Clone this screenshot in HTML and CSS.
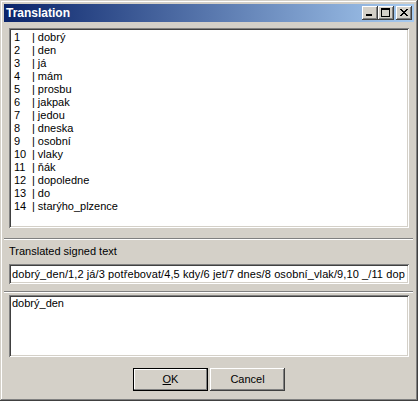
FILE: index.html
```html
<!DOCTYPE html>
<html>
<head>
<meta charset="utf-8">
<link rel="stylesheet" href="styles.css">
</head>
<body>
<div class="window">
  <div class="titlebar">
    <span class="title">Translation</span>
    <div class="tb-buttons">
      <div class="tb-btn"><svg width="16" height="14" shape-rendering="crispEdges"><rect x="4" y="8" width="6" height="2" fill="#000"/></svg></div>
      <div class="tb-btn"><svg width="16" height="14" shape-rendering="crispEdges"><rect x="3" y="2" width="9" height="2" fill="#000"/><rect x="3" y="2" width="1" height="9" fill="#000"/><rect x="11" y="2" width="1" height="9" fill="#000"/><rect x="3" y="10" width="9" height="1" fill="#000"/></svg></div>
      <div class="tb-btn close"><svg width="16" height="14" shape-rendering="crispEdges" fill="#000">
        <rect x="4" y="3" width="2" height="1"/><rect x="10" y="3" width="2" height="1"/>
        <rect x="5" y="4" width="2" height="1"/><rect x="9" y="4" width="2" height="1"/>
        <rect x="6" y="5" width="4" height="1"/>
        <rect x="7" y="6" width="2" height="1"/>
        <rect x="6" y="7" width="4" height="1"/>
        <rect x="5" y="8" width="2" height="1"/><rect x="9" y="8" width="2" height="1"/>
        <rect x="4" y="9" width="2" height="1"/><rect x="10" y="9" width="2" height="1"/>
      </svg></div>
    </div>
  </div>
  <div class="client">
    <div class="listbox">
      <div class="row"><span class="n">1</span><span class="p">|</span>dobrý</div>
      <div class="row"><span class="n">2</span><span class="p">|</span>den</div>
      <div class="row"><span class="n">3</span><span class="p">|</span>já</div>
      <div class="row"><span class="n">4</span><span class="p">|</span>mám</div>
      <div class="row"><span class="n">5</span><span class="p">|</span>prosbu</div>
      <div class="row"><span class="n">6</span><span class="p">|</span>jakpak</div>
      <div class="row"><span class="n">7</span><span class="p">|</span>jedou</div>
      <div class="row"><span class="n">8</span><span class="p">|</span>dneska</div>
      <div class="row"><span class="n">9</span><span class="p">|</span>osobní</div>
      <div class="row"><span class="n">10</span><span class="p">|</span>vlaky</div>
      <div class="row"><span class="n">11</span><span class="p">|</span>ňák</div>
      <div class="row"><span class="n">12</span><span class="p">|</span>dopoledne</div>
      <div class="row"><span class="n">13</span><span class="p">|</span>do</div>
      <div class="row"><span class="n">14</span><span class="p">|</span>starýho_plzence</div>
    </div>
    <div class="sep sep1"></div>
    <div class="label">Translated signed text</div>
    <div class="edit">dobrý_den/1,2 já/3 potřebovat/4,5 kdy/6 jet/7 dnes/8 osobní_vlak/9,10 _/11 dop</div>
    <div class="sep sep2"></div>
    <div class="memo">dobrý_den</div>
    <div class="buttons">
      <div class="btn default"><span class="u">O</span>K</div>
      <div class="btn">Cancel</div>
    </div>
  </div>
</div>
</body>
</html>
```

FILE: styles.css
```css
* { box-sizing: border-box; }
html, body { margin: 0; padding: 0; }
body {
  width: 418px;
  height: 401px;
  overflow: hidden;
  font-family: "Liberation Sans", Arial, sans-serif;
  font-size: 11px;
  color: #000;
  background: #d4d0c8;
}
.window {
  width: 418px;
  height: 401px;
  padding: 4px;
  background: #d4d0c8;
  box-shadow: inset -1px -1px #404040, inset 1px 1px #d4d0c8, inset -2px -2px #808080, inset 2px 2px #ffffff;
  display: flex;
  flex-direction: column;
}
.titlebar {
  height: 18px;
  flex: none;
  display: flex;
  align-items: center;
  justify-content: space-between;
  padding: 0 2px 0 2px;
  background: linear-gradient(to right, #0a246a, #a6caf0);
}
.title {
  color: #fff;
  font-weight: bold;
  font-size: 12px;
  line-height: 18px;
}
.tb-buttons {
  display: flex;
  align-items: center;
}
.tb-btn {
  width: 16px;
  height: 14px;
  background: #d4d0c8;
  box-shadow: inset -1px -1px #404040, inset 1px 1px #ffffff, inset -2px -2px #808080, inset 2px 2px #d4d0c8;
}
.tb-btn svg { display: block; }
.tb-btn.close { margin-left: 2px; }
.client {
  flex: 1;
  display: flex;
  flex-direction: column;
  padding: 6px 5px 0 5px;
}
.listbox, .edit, .memo {
  background: #fff;
  box-shadow: inset 1px 1px #808080, inset -1px -1px #ffffff, inset 2px 2px #404040, inset -2px -2px #d4d0c8;
}
.listbox {
  height: 200px;
  padding: 3px 3px 0 5px;
}
.row {
  line-height: 13px;
  height: 13px;
  white-space: nowrap;
}
.n {
  display: inline-block;
  width: 18px;
}
.p { margin-right: 3px; }
.sep {
  height: 2px;
  border-top: 1px solid #808080;
  border-bottom: 1px solid #ffffff;
  margin-left: -5px;
  margin-right: -4px;
}
.sep1 { margin-top: 10px; }
.label {
  margin-top: 5px;
  line-height: 13px;
  height: 13px;
}
.edit {
  margin-top: 6px;
  height: 20px;
  padding: 2px 2px 2px 3px;
  line-height: 16px;
  white-space: nowrap;
  overflow: hidden;
  letter-spacing: 0.1px;
}
.sep2 { margin-top: 7px; }
.memo {
  margin-top: 2px;
  height: 62px;
  padding: 2px 3px;
  line-height: 13px;
}
.buttons {
  margin-top: 11px;
  display: flex;
  justify-content: center;
  gap: 2px;
}
.btn {
  width: 75px;
  height: 23px;
  line-height: 23px;
  text-align: center;
  background: #d4d0c8;
  box-shadow: inset -1px -1px #404040, inset 1px 1px #ffffff, inset -2px -2px #808080, inset 2px 2px #d4d0c8;
}
.btn.default {
  border: 1px solid #000;
  line-height: 21px;
  box-shadow: inset -1px -1px #808080, inset 1px 1px #ffffff;
}
.u { text-decoration: underline; }
```
